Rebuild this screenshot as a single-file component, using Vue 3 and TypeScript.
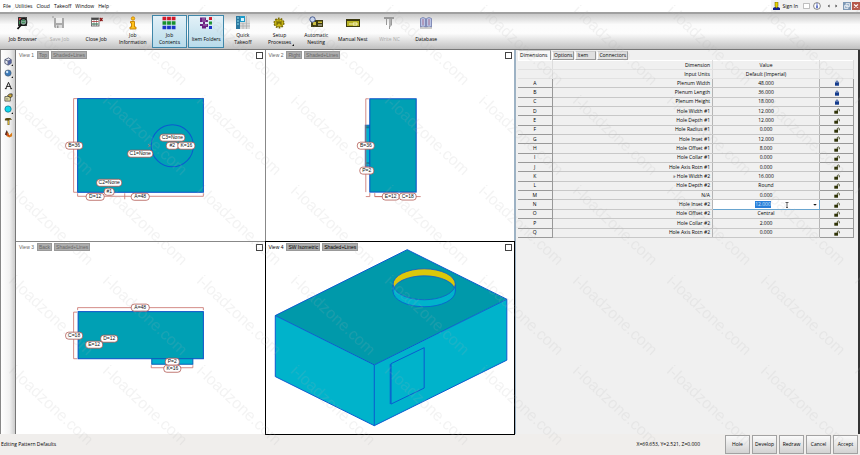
<script setup lang="ts">
import { onMounted, ref } from 'vue'

interface Tool { id: string; lines: string[]; on?: boolean; off?: boolean; more?: boolean }
interface Tag { x: number; y: number; w: number; t: string }
interface Row { key: string; name: string; value: string; locked?: boolean }

const menus = ['File', 'Utilities', 'Cloud', 'Takeoff', 'Window', 'Help']

const tools: Tool[] = [
  { id: 'browser', lines: ['Job Browser'] },
  { id: 'save', lines: ['Save Job'], off: true },
  { id: 'close', lines: ['Close Job'] },
  { id: 'info', lines: ['Job', 'Information'] },
  { id: 'contents', lines: ['Job', 'Contents'], on: true },
  { id: 'folders', lines: ['Item Folders'], on: true },
  { id: 'quick', lines: ['Quick', 'Takeoff'] },
  { id: 'setup', lines: ['Setup', 'Processes'], more: true },
  { id: 'auto', lines: ['Automatic', 'Nesting'] },
  { id: 'manual', lines: ['Manual Nest'] },
  { id: 'nc', lines: ['Write NC'], off: true },
  { id: 'database', lines: ['Database'] },
]

const sideTools = ['cube', 'sphere', 'text', 'note', 'disc', 'hammer', 'paint']

const topTags: Tag[] = [
  { x: 74, y: 145, w: 17, t: 'B=36' },
  { x: 140, y: 153, w: 25, t: 'C1=None' },
  { x: 172, y: 137, w: 25, t: 'C3=None' },
  { x: 172, y: 145, w: 12, t: '#2' },
  { x: 186, y: 145, w: 17, t: 'K=16' },
  { x: 109, y: 182, w: 25, t: 'C2=None' },
  { x: 95, y: 196, w: 18, t: 'D=12' },
  { x: 109, y: 191, w: 10, t: '#1' },
  { x: 140, y: 196, w: 18, t: 'A=48' },
]
const rightTags: Tag[] = [
  { x: 365, y: 145, w: 17, t: 'B=36' },
  { x: 366, y: 170, w: 14, t: 'P=2' },
  { x: 390, y: 196, w: 17, t: 'E=12' },
  { x: 407, y: 196, w: 17, t: 'C=18' },
]
const backTags: Tag[] = [
  { x: 140, y: 307, w: 18, t: 'A=48' },
  { x: 74, y: 335, w: 17, t: 'C=18' },
  { x: 109, y: 338, w: 17, t: 'D=12' },
  { x: 94, y: 344, w: 17, t: 'E=12' },
  { x: 172, y: 361, w: 14, t: 'P=2' },
  { x: 172, y: 368, w: 17, t: 'K=16' },
]

const views = [
  { n: 1, side: 'Top', box: '16 50 248 191', tags: topTags },
  { n: 2, side: 'Right', box: '265 50 249 191', tags: rightTags },
  { n: 3, side: 'Back', box: '16 242 248 191', tags: backTags },
  { n: 4, side: 'SW Isometric', box: '265 242 249 191', tags: [] as Tag[] },
]

const rows: Row[] = [
  { key: 'A', name: 'Plenum Width', value: '48.000', locked: true },
  { key: 'B', name: 'Plenum Length', value: '36.000', locked: true },
  { key: 'C', name: 'Plenum Height', value: '18.000', locked: true },
  { key: 'D', name: 'Hole Width #1', value: '12.000' },
  { key: 'E', name: 'Hole Depth #1', value: '12.000' },
  { key: 'F', name: 'Hole Radius #1', value: '0.000' },
  { key: 'G', name: 'Hole Inset #1', value: '12.000' },
  { key: 'H', name: 'Hole Offset #1', value: '8.000' },
  { key: 'I', name: 'Hole Collar #1', value: '0.000' },
  { key: 'J', name: 'Hole Axis Rotn #1', value: '0.000' },
  { key: 'K', name: '» Hole Width #2', value: '16.000' },
  { key: 'L', name: 'Hole Depth #2', value: 'Round' },
  { key: 'M', name: 'N/A', value: '0.000' },
  { key: 'N', name: 'Hole Inset #2', value: '12.000' },
  { key: 'O', name: 'Hole Offset #2', value: 'Central' },
  { key: 'P', name: 'Hole Collar #2', value: '2.000' },
  { key: 'Q', name: 'Hole Axis Rotn #2', value: '0.000' },
]

const tabs = ['Dimensions', 'Options', 'Item', 'Connectors']
const activeTab = ref('Dimensions')
const activeView = ref(4)
const inset = ref('12.000')
const actions = ['Hole', 'Develop', 'Redraw', 'Cancel', 'Accept']

onMounted(() => {
  const field = document.getElementById('inset-2') as HTMLInputElement | null
  field?.focus({ preventScroll: true })
  field?.select()
})
</script>

<template>
  <div class="app">
    <header class="menubar">
      <nav class="menus">
        <button v-for="m in menus" :key="m" type="button">{{ m }}</button>
      </nav>
      <div class="account">
        <button type="button" class="signin">
          <svg width="7" height="8" viewBox="0 0 7 8" aria-hidden="true">
            <path d="M0 8V6L2 5H5L7 6V8Z" fill="#10208c" />
            <path d="M2 0H5V4L4 6H3L2 4Z" fill="#e6d200" stroke="#554c00" stroke-width=".5" />
          </svg>
          Sign In
        </button>
        <button type="button" aria-label="Messages">
          <svg width="7" height="6" viewBox="0 0 7 6"><path d="M.5.5H6.500V5.500H.5Z" fill="#fff" stroke="#999" stroke-width=".6" /></svg>
        </button>
        <button type="button" aria-label="About">
          <svg width="8" height="8" viewBox="0 0 8 8">
            <circle cx="4" cy="4" r="3.400" fill="#fff" stroke="#555" stroke-width=".7" />
            <path d="M4 1.500V2.600M4 3.300V6.300" stroke="#1a36b0" stroke-width="1.300" />
          </svg>
        </button>
        <span class="winbar">
          <button type="button" aria-label="Previous"><svg width="3" height="4" viewBox="0 0 3 4"><path d="M2.500.5V3.500L.8 2Z" fill="#333" /></svg></button>
          <button type="button" aria-label="Next"><svg width="3" height="4" viewBox="0 0 3 4"><path d="M.5.5V3.500L2.200 2Z" fill="#333" /></svg></button>
          <span class="winpair">
            <button type="button" class="win" aria-label="Restore"><svg width="8" height="8" viewBox="0 0 8 8"><path d="M3 1.500H6.500V4.500H3ZM1.500 3.500H5V6.500H1.500Z" fill="#9fb6cc" stroke="#e8eef4" stroke-width=".8" /></svg></button>
            <button type="button" class="win shut" aria-label="Close"><svg width="8" height="8" viewBox="0 0 8 8"><path d="M2 2.500L6 5.500M6 2.500L2 5.500" stroke="#fff" stroke-width="1.200" /></svg></button>
          </span>
        </span>
      </div>
    </header>

    <div class="toolbar" role="toolbar">
      <div class="tools">
        <button v-for="t in tools" :key="t.id" type="button" class="tool" :class="{ on: t.on, off: t.off }">
          <svg class="tool-icon" viewBox="0 0 14 14" aria-hidden="true">
            <template v-if="t.id === 'browser'">
              <rect x="2" y="1" width="9" height="9" fill="#333" />
              <path d="M3 2H5V4H3Z" fill="#d33" /><path d="M3 5H5V8H3Z" fill="#3a5" />
              <circle cx="7.500" cy="6" r="3.300" fill="#7fa392" stroke="#151515" stroke-width="1.200" />
              <path d="M5.500 8.500L1.500 13" stroke="#111" stroke-width="1.800" />
              <path d="M6 4.500H9M6 6.500H9" stroke="#2c8a4a" stroke-width=".8" />
            </template>
            <template v-else-if="t.id === 'save'">
              <path d="M2 2H12V12H3L2 11Z" fill="#aaa" /><path d="M4 2H10V7H4Z" fill="#eee" />
              <path d="M4 9H10V12H4Z" fill="#ddd" /><path d="M5 9.500H6.500V12H5Z" fill="#999" /><path d="M0 1H2" stroke="#999" />
            </template>
            <template v-else-if="t.id === 'close'">
              <rect x="2.500" y="2" width="7.500" height="8" fill="#fff" stroke="#555" stroke-width=".8" />
              <path d="M3 3H9.500" stroke="#222" stroke-width="1.500" />
              <path d="M3 5.500H9.500" stroke="#c55" /><path d="M3 8H9.500" stroke="#5a9a7a" stroke-width="1.500" /><path d="M5 4V10M7.500 4V10" stroke="#555" stroke-width=".5" />
              <path d="M11 2L13.500 5M13.500 2L11 5" stroke="#8a1010" stroke-width="1.200" />
            </template>
            <template v-else-if="t.id === 'info'">
              <circle cx="7" cy="2.500" r="1.700" fill="#ffc21a" stroke="#c48000" stroke-width=".8" />
              <path d="M4.500 5.500H8.500V11H10V13H4V11H5.500V7H4.500Z" fill="#ffc21a" stroke="#c48000" stroke-width=".9" />
            </template>
            <template v-else-if="t.id === 'contents'">
              <path d="M.5 2.500H13.500" stroke="#d11a2a" stroke-width="3.500" stroke-dasharray="3.800 .8" />
              <path d="M.5 7H13.500" stroke="#18902c" stroke-width="3.500" stroke-dasharray="3.800 .8" />
              <path d="M.5 11.500H13.500" stroke="#1c35c8" stroke-width="3.500" stroke-dasharray="3.800 .8" />
            </template>
            <template v-else-if="t.id === 'folders'">
              <path d="M1 1.500H7V4H9V6H6V8H9V11H7V12.500H3V10H1V8H4V6H1Z" fill="#6a2080" />
              <path d="M3 3H6M3 5H7M4 9H8" stroke="#c9a3d6" stroke-width=".7" />
              <rect x="10" y="1" width="3" height="3" fill="#d11a2a" /><rect x="10" y="5.500" width="3" height="3" fill="#18902c" /><rect x="10" y="10" width="3" height="3" fill="#1c35c8" />
            </template>
            <template v-else-if="t.id === 'quick'">
              <path d="M0 0H4V13H0Z" fill="#2b78a0" /><path d="M1 2H3M1 5H3M1 8H3" stroke="#8fe0ee" />
              <path d="M4 0H9V6H4Z" fill="#1e9ac8" /><path d="M5 2H8V5H5Z" fill="#d8f4ff" />
              <path d="M9 0H14V6H9ZM4 7H14V13H4Z" fill="#d9d9d9" /><path d="M4 7H14M4 10H14M7 7V13M10.500 0V13" stroke="#aaa" stroke-width=".7" />
            </template>
            <template v-else-if="t.id === 'setup'">
              <circle cx="7" cy="7" r="4.500" fill="none" stroke="#786a00" stroke-width="2" stroke-dasharray="1.600 1.200" />
              <ellipse cx="7" cy="7" rx="4.500" ry="3.800" fill="#cdbb14" stroke="#786a00" stroke-width=".7" />
              <path d="M5 5V9M7 4.500V7M9 5V9M5 7H9" stroke="#5a5000" stroke-width=".9" fill="none" />
            </template>
            <template v-else-if="t.id === 'auto'">
              <rect x="2" y="4" width="12" height="7" fill="#3c3a10" />
              <path d="M4 6H7V9H4ZM9 5.500H13V7H9Z" fill="#cfc03a" /><path d="M9 9H13" stroke="#fff" stroke-width=".8" />
              <circle cx="3.500" cy="3.500" r="2.700" fill="#c9d6ee" stroke="#3c4f86" stroke-width=".9" />
            </template>
            <template v-else-if="t.id === 'manual'">
              <rect x=".5" y="3.500" width="13" height="7" fill="#b7b226" stroke="#3c3a10" />
              <path d="M1 4.500H13" stroke="#3c3a10" /><path d="M3 8H6M7 7H11V9H7Z" stroke="#fffbd0" fill="none" stroke-width=".9" />
            </template>
            <template v-else-if="t.id === 'nc'">
              <path d="M2 1H12V3H10V9L8 11V13H7V3H5V9H4V3H2Z" fill="#999" /><path d="M8 3V10" stroke="#ccc" />
            </template>
            <template v-else>
              <path d="M1.500 2.500L4 1.500L6.500 2.500V11L4 10L1.500 11Z" fill="#bcc5e6" stroke="#6d78aa" stroke-width=".8" />
              <path d="M7.500 2.500L10 1.500L12.500 2.500V11L10 10L7.500 11Z" fill="#bcc5e6" stroke="#6d78aa" stroke-width=".8" />
              <path d="M4 3V9M10 3V9" stroke="#a05a78" stroke-width=".8" /><path d="M1 12H13" stroke="#888" stroke-width=".8" />
            </template>
          </svg>
          <span class="tool-label"><span v-for="l in t.lines" :key="l">{{ l }}</span></span>
          <i v-if="t.more" class="more"></i>
        </button>
      </div>
    </div>

    <main class="work">
      <aside class="side">
        <button v-for="s in sideTools" :key="s" type="button" :aria-label="s">
          <svg width="9" height="9" viewBox="0 0 10 10">
            <template v-if="s === 'cube'">
              <path d="M1 3L5 1L8 3V7L4.500 9L1 7Z" fill="#e8ebf4" stroke="#2d3656" stroke-width=".8" /><path d="M1 3L4.500 4.500L8 3M4.500 4.500V9" stroke="#2d3656" stroke-width=".8" fill="none" /><path d="M4.500 4.500L8 3V7L4.500 9Z" fill="#56639c" /><path d="M10 8V10H8Z" fill="#111" />
            </template>
            <template v-else-if="s === 'sphere'">
              <circle cx="4.500" cy="4.500" r="3.500" fill="#3b79b8" stroke="#4b5660" stroke-width=".6" /><circle cx="3.500" cy="3.300" r="1.300" fill="#cfe6fa" /><path d="M10 8V10H8Z" fill="#111" />
            </template>
            <template v-else-if="s === 'text'">
              <path d="M2 8.500L5 1.500L8 8.500M3 6H7M1 8.500H3M7 8.500H9" fill="none" stroke="#111" stroke-width="1" />
            </template>
            <template v-else-if="s === 'note'">
              <path d="M1 4H7V9H1Z" fill="#f3eeb0" stroke="#333" stroke-width=".8" /><path d="M4 3L6 1H9V4L7 5Z" fill="#c9a63a" stroke="#222" stroke-width=".8" /><path d="M2 6H5M2 7.500H5" stroke="#555" stroke-width=".6" />
            </template>
            <template v-else-if="s === 'disc'">
              <circle cx="4.500" cy="4.500" r="3.500" fill="#10d8ea" stroke="#0b6c8c" stroke-width=".8" /><path d="M10 8V10H8Z" fill="#111" />
            </template>
            <template v-else-if="s === 'hammer'">
              <path d="M1 2L3 1H7L9 3H6V9H4V4H1Z" fill="#5a4a10" /><path d="M5 4V8.500" stroke="#e0bd3a" stroke-width="1" />
            </template>
            <template v-else>
              <path d="M1 6L3 1L5 5L4 8Z" fill="#4a2c20" /><path d="M4 3L6 7L9 4V8L6 9.500L3 8Z" fill="#d87b18" /><path d="M2 5L6 8" stroke="#c22" stroke-width=".9" />
            </template>
          </svg>
        </button>
      </aside>

      <section class="views">
        <article v-for="v in views" :key="v.n" class="view" :class="{ active: v.n === activeView }" @click="activeView = v.n">
          <svg class="canvas" :viewBox="v.box">
            <g v-if="v.n === 1">
              <rect x="77.500" y="98.500" width="125.500" height="93.500" class="face" />
              <circle cx="172" cy="145.500" r="21" class="edge" />
              <path d="M77 98.500H73.500V192H77M77.500 193V196H203V193M124.500 193V199M148 144L150 146M148 147L150 145" class="dim" />
            </g>
            <g v-else-if="v.n === 2">
              <rect x="364.500" y="125" width="5" height="41" class="collar" />
              <path d="M364.500 127H369M364.500 163H369" stroke="#0a7c98" stroke-width="2" />
              <rect x="369" y="98.500" width="46.500" height="93.500" class="face" />
              <path d="M368 98.500H365V192M365 196.500H369V193M374 193V196.500H420M374 196.500H382" class="dim" />
            </g>
            <g v-else-if="v.n === 3">
              <rect x="78" y="311.500" width="125" height="47" class="face" />
              <rect x="151.500" y="358.500" width="41" height="5.500" class="collar" />
              <path d="M77.500 310V307.500H203V310M77 312H73.500V358.500H77M151 365V367.500H192.500V365" class="dim" />
            </g>
            <g v-else>
              <path d="M274.300 315.300L373.500 364.800L506.300 299V360L373.500 425.700L274.300 376.500Z" fill="#00b3cb" />
              <path d="M274.300 315.300L406.500 249.300L506.300 299L373.500 364.800Z" fill="#0099aa" />
              <ellipse cx="423.500" cy="284" rx="31.200" ry="15.500" fill="#dcc80a" />
              <path d="M392.300 284V291A31.200 15.500 0 0 1 454.700 291V284A31.200 15.500 0 0 1 392.300 284Z" fill="#0099aa" />
              <path d="M392.300 291A31.200 15.500 0 0 1 454.700 291" class="edge thin" />
              <path d="M392.300 284A31.200 15.500 0 0 0 454.700 284V291A31.200 15.500 0 0 1 392.300 291Z" fill="#00b3cb" />
              <ellipse cx="423.500" cy="284" rx="31.200" ry="15.500" class="edge thin" />
              <path d="M392.300 284V291A31.200 15.500 0 0 0 454.700 291V284" class="edge thin" />
              <path d="M274.300 315.300L406.500 249.300L506.300 299L373.500 364.800ZM274.300 315.300V376.500L373.500 425.700L506.300 360V299M373.500 364.800V425.700" class="edge" />
              <path d="M390.300 363.500L423.500 347.500V388L390.300 404Z" class="edge" /><path d="M389.500 364V404" class="edge" />
            </g>
            <g v-for="tag in v.tags" :key="tag.t">
              <rect :x="tag.x - tag.w / 2" :y="tag.y - 3" :width="tag.w" height="7" rx="3" class="pill" />
              <text :x="tag.x" :y="tag.y + 2" class="pill-text">{{ tag.t }}</text>
            </g>
          </svg>
          <div class="view-head">
            <span class="view-name">View {{ v.n }}</span>
            <button type="button">{{ v.side }}</button>
            <button type="button">Shaded+Lines</button>
            <button type="button" class="expand" aria-label="Maximise view"></button>
          </div>
        </article>
      </section>

      <section class="panel">
        <div class="tabs" role="tablist">
          <button v-for="t in tabs" :key="t" type="button" role="tab" :aria-selected="t === activeTab" :class="{ current: t === activeTab }" @click="activeTab = t">{{ t }}</button>
        </div>
        <table>
          <colgroup><col class="c-key" /><col /><col class="c-val" /><col class="c-lock" /></colgroup>
          <thead>
            <tr><td></td><th scope="col" class="name">Dimension</th><th scope="col">Value</th><td></td></tr>
            <tr><td></td><th class="name">Input Units</th><th>Default (Imperial)</th><td></td></tr>
          </thead>
          <tbody>
            <tr v-for="r in rows" :key="r.key">
              <td class="key">{{ r.key }}</td>
              <td class="name"><label v-if="r.key === 'N'" for="inset-2">{{ r.name }}</label><template v-else>{{ r.name }}</template></td>
              <td v-if="r.key === 'N'" class="editing">
                <div class="combo">
                  <input id="inset-2" v-model="inset" type="text" />
                  <svg class="ibeam" viewBox="0 0 4 6" aria-hidden="true"><path d="M.5.5H3.500M2 .5V5.500M1 5.500H3" stroke="#222" stroke-width=".7" fill="none" /></svg>
                  <button type="button" aria-label="Show values"></button>
                </div>
              </td>
              <td v-else>{{ r.value }}</td>
              <td class="lock">
                <button type="button" :aria-label="r.locked ? 'Unlock' : 'Lock'">
                  <svg v-if="r.locked" viewBox="0 0 6 6"><rect x="1" y="2.500" width="4" height="3.200" fill="#123a8c" /><path d="M2 3V1.500Q3 .2 4 1.500V3" fill="none" stroke="#123a8c" stroke-width=".8" /></svg>
                  <svg v-else viewBox="0 0 6 6"><rect x=".3" y="2.700" width="3.700" height="3" fill="#2f3308" /><path d="M3.300 3V1.500Q4.300.3 5.300 1.500V3.300" fill="none" stroke="#2f3308" stroke-width=".8" /></svg>
                </button>
              </td>
            </tr>
          </tbody>
        </table>
      </section>
    </main>

    <footer class="status">
      <span class="message">Editing Pattern Defaults</span>
      <span class="coords">X=69.653, Y=2.521, Z=0.000</span>
      <div class="actions"><button v-for="a in actions" :key="a" type="button">{{ a }}</button></div>
    </footer>

    <svg class="watermark" aria-hidden="true">
      <defs>
        <pattern id="mark" x="4" y="5" width="94" height="90" patternUnits="userSpaceOnUse">
          <text x="4" y="7" transform="rotate(43 4 7)" class="mark-text">i-loadzone.com</text>
        </pattern>
      </defs>
      <rect width="100%" height="100%" fill="url(#mark)" />
    </svg>
  </div>
</template>

<style>
body { overflow: hidden; }
</style>

<style scoped>
.app {
  position: relative;
  display: flex;
  flex-direction: column;
  height: 100vh;
  background: #f0eeec;
  color: #000;
  font: 500 5px/7px "Open Sans", sans-serif;
}
button, input { margin: 0; padding: 0; border: 0; background: none; font: inherit; color: inherit; white-space: nowrap; }
svg { display: block; }

.menubar { display: flex; justify-content: space-between; height: 12px; background: #fff; border-bottom: 2px solid #a0a0a0; }
.menus { display: flex; gap: 4px; padding-left: 3px; }
.account { display: flex; align-items: center; gap: 3px; padding-left: 2px; background: #f2f2f2; }
.signin { display: flex; align-items: center; gap: 2px; padding-right: 2px; }
.winbar { display: flex; align-items: center; gap: 5px; padding-left: 3px; }
.winpair { display: flex; gap: 1px; }
.win { background: #7d98b5; }
.shut { background: #b65a4c; }

.toolbar {
  padding: 1px 0 1px 5px;
  background: linear-gradient(#c9c9c9, #fbfbfb 30%, #fdfdfd 55%, #c0c0c0);
  border-bottom: 1px solid #777;
}
.tools { display: grid; grid-template-columns: repeat(12, minmax(0, 1fr)); max-width: 440px; height: 33px; }
.tool { position: relative; display: flex; flex-direction: column; align-items: center; gap: 1px; margin-right: 1px; border: 1px solid transparent; }
.tool.on { border-color: #3f86a8; background: linear-gradient(#e3f1f8, #b8dbea); }
.tool.off { color: #aaa; }
.tool-icon { width: 14px; height: 14px; }
.tool-label { display: flex; flex: 1; flex-direction: column; justify-content: center; }
.more { position: absolute; right: 2px; bottom: 1px; border: 1px solid transparent; border-right-color: #111; border-bottom-color: #111; }

.work { display: grid; grid-template-columns: 16px minmax(0, 498fr) minmax(0, 346fr); flex: 1; min-height: 0; border-bottom: 1px solid #666; }
.side { display: flex; flex-direction: column; gap: 3px; padding: 7px 0 0 1px; background: linear-gradient(90deg, #fff, #f2f2f2 60%, #ccc); border-left: 1px solid #888; border-right: 1px solid #777; }
.side button { display: flex; justify-content: center; }

.views { display: grid; grid-template: repeat(2, minmax(0, 1fr)) / repeat(2, minmax(0, 1fr)); gap: 1px; background: #888; }
.view { position: relative; background: #fff; }
.canvas { width: 100%; height: 100%; }
.view.active { outline: 1px solid #000; }
.view-head { position: absolute; top: 1px; left: 3px; right: 2px; display: flex; align-items: center; gap: 2px; color: #666; font: 5px/6px "Liberation Sans", sans-serif; }
.view-name { margin-right: 1px; }
.view-head button { padding: 0 1px; background: #adadad; border: 1px solid #999; }
.view.active .view-head { color: #000; }
.view-head .expand { width: 7px; height: 7px; margin-left: auto; background: #fff; border: 1px solid #444; box-sizing: border-box; }

.face { fill: #00a0b4; stroke: #0a50c8; stroke-width: 1; }
.collar { fill: #00b0d0; stroke: #0a60b8; stroke-width: 1; }
.edge { fill: none; stroke: #0a5ad0; stroke-width: 1; }
.thin { stroke-width: .8; }
.dim { fill: none; stroke: #c8706a; stroke-width: .8; }
.pill { fill: #fff; stroke: #a8443c; stroke-width: .7; }
.pill-text { font: 5px "Liberation Sans", sans-serif; fill: #111; text-anchor: middle; }

.panel { padding: 0 4px 0 2px; background: #f0f0f0; border-left: 2px solid #9db2c4; border-right: 2px solid #333; }
.tabs { display: flex; align-items: flex-end; gap: 1px; height: 10px; }
.tabs button { padding: 0 1px; min-width: 21px; box-sizing: border-box; height: 9px; background: #e0e0e0; border: 1px solid #999; border-left-color: #fff; border-top-color: #ccc; text-align: left; }
.tabs .current { height: 10px; min-width: 33px; background: #f7f7f7; border-bottom: 0; }
table { width: 100%; height: 178px; border-collapse: collapse; table-layout: fixed; border-top: 1px solid #fff; }
.c-key, .c-lock { width: 34px; }
.c-val { width: 107px; }
td, th { padding: 0; height: 8px; line-height: 7px; text-align: center; font-weight: 500; border-right: 1px solid #b5b5b5; border-bottom: 1px solid #c8c8c8; }
thead td, thead th { border-bottom-color: #e2e2e2; border-right-color: #ddd; }
.name { text-align: right; padding-right: 2px; }
.key, .lock { border-bottom-color: #999; border-right-color: #999; }
.lock button { display: block; width: 6px; margin: 0 auto; }
.editing { background: #fff; border: 1px solid #69a5cf; }
.combo { position: relative; display: flex; align-items: center; height: 7px; }
.combo input { flex: 1; width: 0; min-width: 0; height: 7px; text-align: center; outline: 0; line-height: 7px; }
.combo input::selection { background: #2a7fd8; color: #cfe6ff; }
.combo button { width: 4px; height: 2px; margin-right: 2px; background: #111; clip-path: polygon(0 0, 100% 0, 50% 100%); }
.ibeam { position: absolute; left: 68%; top: 1px; width: 4px; height: 6px; }

.status { display: flex; align-items: center; height: 21px; padding: 0 2px 0 1px; background: #f0eeec; }
.message { flex: 1; }
.coords { margin-right: 25px; }
.actions { display: flex; gap: 2px; }
.actions button { width: 25px; height: 19px; background: linear-gradient(#fafafa, #d2d2d2); border: 1px solid #a2a2a2; box-sizing: border-box; }

.watermark { position: absolute; inset: 0; width: 100%; height: 100%; pointer-events: none; }
.mark-text { font: 16px "Liberation Sans", sans-serif; fill: #aaa; fill-opacity: .15; }
</style>
